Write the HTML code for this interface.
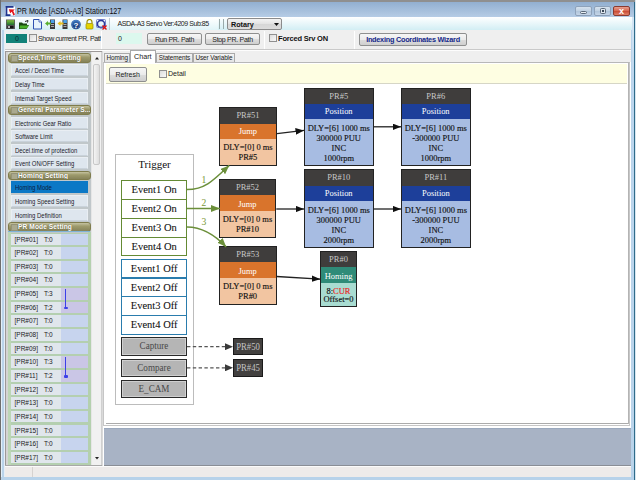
<!DOCTYPE html>
<html><head><meta charset="utf-8">
<style>
*{margin:0;padding:0;box-sizing:border-box}
html,body{width:636px;height:480px;overflow:hidden;background:#b9d3ea}
body{position:relative;font-family:"Liberation Sans",sans-serif;font-size:7px;color:#111}
.a{position:absolute}
.sf{font-family:"Liberation Serif",serif}
.t{white-space:nowrap;line-height:1}
.btn{position:absolute;border:1px solid #8e8f8f;border-radius:2px;background:linear-gradient(#f6f6f6 0%,#ebebeb 50%,#dddddd 51%,#cfcfcf 100%);text-align:center;white-space:nowrap;color:#222}
.sep{position:absolute;width:1px;background:#d0d0d0;border-right:1px solid #fff}
.cb{position:absolute;width:8px;height:8px;border:1px solid #8f8f8f;background:linear-gradient(135deg,#dcdcdc,#f8f8f8)}
.hd{position:absolute;left:8px;width:82.5px;height:9.5px;border-radius:3px;border:1px solid #7f7c4c;background:linear-gradient(#c4c2a0,#9e9b6c 40%,#86835a);color:#fff;font-weight:bold;font-size:6.6px;line-height:7.5px;padding-left:9px;white-space:nowrap;overflow:hidden;text-shadow:0 0 1.2px #4e4c30;letter-spacing:.1px}
.hd:before{content:"";position:absolute;left:2px;top:1.2px;width:5px;height:5px;background:#aaa98e;border:.5px solid #959378}
.it{position:absolute;left:10.5px;width:77.5px;height:12px;background:#dee6ee;border:1px solid #e9eef3;border-bottom-color:#c9d2da;font-size:6.9px;line-height:11.5px;padding-left:3px;white-space:nowrap;color:#1a1a2a}.ix{display:inline-block;transform:scaleX(.86);transform-origin:0 50%}
.pr{position:absolute;left:10.5px;width:77.5px;height:11.5px;background:linear-gradient(90deg,#e0e6ec 0,#e0e6ec 50px,#c7d4ee 50px);font-size:6.5px;line-height:11.5px;padding-left:4px;white-space:nowrap;color:#1c1c1c}
.pr span{position:absolute;left:33.5px;top:0}
.node{position:absolute;border:1.3px solid #222;background:#3f3d3c;font-family:"Liberation Serif",serif;text-align:center;white-space:nowrap;overflow:hidden}
.node .h{color:#c9c9c9;font-size:9.1px}.sx{transform:scaleX(.93);transform-origin:50% 50%}
.node .b{color:#fff;font-size:9.1px}
.node .c{color:#111;font-size:9.1px;line-height:10px;-webkit-text-stroke-width:.15px}
.ev{position:absolute;left:120.9px;width:66.3px;height:19.5px;background:#fff;font-family:"Liberation Serif",serif;font-size:11.3px;text-align:center;line-height:17px;white-space:nowrap;color:#111;-webkit-text-stroke-width:.08px}
.on{border:1.8px solid #648a34}
.off{border:1.8px solid #2a7cad}
.gb{position:absolute;left:121px;width:66px;height:18.5px;background:#b5b5b5;border:1.5px solid #2a2a2a;box-shadow:inset 0 0 0 .8px #d8d8d8;font-family:"Liberation Serif",serif;font-size:9.8px;text-align:center;line-height:16.5px;color:#484848;white-space:nowrap}
.pb{position:absolute;left:233px;width:30px;height:17.7px;background:#42403f;border:1.3px solid #1a1a1a;color:#c4c4c4;font-family:"Liberation Serif",serif;font-size:9.4px;line-height:17px;text-align:center;white-space:nowrap}
</style></head><body>
<!-- window frame -->
<div class="a" style="left:0;top:0;width:635px;height:1.6px;background:#8f8f8f"></div>
<div class="a" style="left:0;top:0;width:1.2px;height:480px;background:#6e6e6e"></div><div class="a" style="left:1.2px;top:17px;width:.8px;height:463px;background:#e2eff9"></div><div class="a" style="left:4.4px;top:30px;width:.6px;height:447px;background:#e6eef6"></div>
<div class="a" style="left:1px;top:2px;width:633px;height:15px;background:linear-gradient(#92afd0,#b5cce5)"></div>
<div class="a" style="left:634.3px;top:2px;width:1px;height:478px;background:#2f6c8a"></div><div class="a" style="left:635.3px;top:0;width:.7px;height:480px;background:#dfe9ef"></div>
<div class="a" style="left:635px;top:0;width:1px;height:480px;background:#d8e6f0"></div>
<!-- title -->
<svg class="a" style="left:5px;top:6px" width="11" height="10" viewBox="0 0 11 10"><rect x="0.5" y="0.5" width="9.5" height="9" fill="#fff"/><path d="M0.5 0.8H8.5M1.5 0.8V9.2M0.5 9.2H5.5" stroke="#1f3590" stroke-width="1.7" fill="none"/><path d="M3.8 3.2L9.8 3.6L8.2 5L10 8.6L8.4 9.4L6.8 5.8L5.2 7.2Z" fill="#e3141c"/></svg>
<div class="a t" style="left:17px;top:7px;font-size:8.3px;color:#0c0c0c;transform:scaleX(.86);transform-origin:0 0">PR Mode [ASDA-A3] Station:127</div>
<div class="a" style="left:575px;top:6px;width:17px;height:10px;border:1px solid #8ea2ba;border-radius:2px;background:linear-gradient(#d6e2ee,#bfd0e2 50%,#afc4da 51%,#c6d6e8)"></div>
<div class="a" style="left:580px;top:10.5px;width:7px;height:3px;background:#e8eef4;border:1px solid #5a6878;border-radius:1.5px"></div>
<div class="a" style="left:594px;top:6px;width:17px;height:10px;border:1px solid #8ea2ba;border-radius:2px;background:linear-gradient(#d6e2ee,#bfd0e2 50%,#afc4da 51%,#c6d6e8)"></div>
<div class="a" style="left:599.5px;top:8px;width:6.5px;height:5.5px;border:1.3px solid #5a6878;background:#dfe6ee;border-radius:1.5px"></div><div class="a" style="left:602px;top:10px;width:1.5px;height:1.5px;background:#3a4858"></div>
<div class="a" style="left:613px;top:6px;width:17px;height:10px;border:1px solid #8a3a30;border-radius:2px;background:linear-gradient(#e6a090,#d8644e 50%,#c84a34 51%,#e08068)"></div>
<div class="a t" style="left:617px;top:6px;font-size:9px;font-weight:bold;color:#fff;width:9px;text-align:center;line-height:10px">x</div>
<!-- toolbar -->
<div class="a" style="left:1px;top:17px;width:630.5px;height:13px;background:linear-gradient(#ffffff,#d2eef4)"></div><div class="a" style="left:631.5px;top:17px;width:2.8px;height:460px;background:linear-gradient(#d6e6f4,#bcd6ee 60px,#b9d3ea)"></div>
<svg class="a" style="left:5px;top:19px" width="104" height="11" viewBox="0 0 104 11">
<defs><linearGradient id="fg" x1="0" y1="0" x2="0" y2="1"><stop offset="0" stop-color="#7cc03a"/><stop offset="1" stop-color="#1f6e35"/></linearGradient>
<linearGradient id="hg" x1="0" y1="0" x2="0" y2="1"><stop offset="0" stop-color="#3a78c0"/><stop offset="1" stop-color="#0c2a66"/></linearGradient></defs>
<rect x="1" y="0.5" width="9" height="9.5" fill="#5a5a5a"/><rect x="1.8" y="1.2" width="7.4" height="4.8" fill="url(#fg)"/><rect x="2.5" y="6.8" width="6" height="2.6" fill="#111"/><rect x="3" y="7.2" width="2" height="1.6" fill="#ddd"/>
<path d="M14 3.5 L17 3.5 L18 4.5 L22 4.5 L22 6 L24 6 L21.5 10 L14 10 Z" fill="#1a4a12"/><path d="M15 6.5 L24 6.5 L21.5 9.5 L14.5 9.5 Z" fill="#48b02a"/><path d="M20 2.5 L23 1.5 L22.5 3.5" stroke="#222" stroke-width="1" fill="none"/>
<path d="M28.5 0.5 H34 L36.5 3 V10 H28.5 Z" fill="#e6f4fb" stroke="#2f52b0" stroke-width="1"/><path d="M34 0.5 V3 H36.5" fill="#fff" stroke="#2f52b0" stroke-width=".8"/>
<rect x="45" y="0.5" width="5" height="9.5" fill="#3a3a3a"/><rect x="45.8" y="1" width="3.6" height="3" fill="#4aa0e8"/><rect x="46" y="5" width="3" height="1" fill="#aaa"/><rect x="46" y="7" width="3" height="1" fill="#aaa"/>
<path d="M40 4.5 L43 2 V3.5 H46 V5.5 H43 V7 Z" fill="#5ab030"/>
<rect x="57.5" y="0.5" width="5" height="9.5" fill="#3a3a3a"/><rect x="58.3" y="1" width="3.6" height="3" fill="#4aa0e8"/><rect x="58.5" y="5" width="3" height="1" fill="#aaa"/><rect x="58.5" y="7" width="3" height="1" fill="#aaa"/>
<path d="M52.5 4.5 L55.5 2 V3.5 H58.5 V5.5 H55.5 V7 Z" fill="#e8c020"/>
<circle cx="71" cy="5.5" r="4.8" fill="url(#hg)"/><circle cx="71" cy="5.5" r="4" fill="none" stroke="#5a8ad0" stroke-width=".6"/><text x="71" y="8.6" font-family="Liberation Sans" font-weight="bold" font-size="8" fill="#fff" text-anchor="middle">?</text>
<path d="M82 4.5 V3 A2.5 2.5 0 0 1 87 3 V4.5" stroke="#a09000" stroke-width="1.2" fill="none"/><rect x="81" y="4.5" width="7" height="5.5" rx="1" fill="#e4d400" stroke="#9a8a00" stroke-width=".7"/>
<circle cx="96" cy="5" r="3.6" fill="none" stroke="#2b3a9a" stroke-width="1.6"/><rect x="91.5" y="0.5" width="9" height="8" rx="1" fill="none" stroke="#5a68c0" stroke-width=".8"/><path d="M97.5 6.5 L101.5 10.5 M101.5 6.5 L97.5 10.5" stroke="#e01010" stroke-width="1.4"/>
</svg>
<div class="a" style="left:108.5px;top:17.5px;width:2px;height:12.5px;background:#d4dfe4;border-left:1px solid #c3ccd2"></div>
<div class="a" style="left:110px;top:18px;width:108px;height:12px;background:linear-gradient(#ffffff,#e0f4f8)"></div><div class="a t" style="left:117.5px;top:20px;font-size:7px;color:#1a1a1a;letter-spacing:-.45px">ASDA-A3 Servo Ver:4209 Sub:85</div>
<div class="a" style="left:219px;top:19px;width:1px;height:10px;background:#9aa"></div>
<div class="a" style="left:223px;top:19px;width:1px;height:10px;background:#9aa"></div>
<div class="a" style="left:227px;top:18px;width:55px;height:12px;border:1px solid #8b8b8b;border-radius:2px;background:linear-gradient(#f4f4f4,#e2e2e2 50%,#d6d6d6 51%,#dcdcdc)"></div>
<div class="a t" style="left:231px;top:20.5px;font-size:7.2px;font-weight:bold;color:#111">Rotary</div>
<svg class="a" style="left:274px;top:23px" width="5" height="3"><path d="M0 0H5L2.5 3Z" fill="#111"/></svg>
<!-- row2 -->
<div class="a" style="left:5px;top:30px;width:626px;height:436px;background:#efefef"></div>
<div class="a" style="left:6px;top:34px;width:21px;height:8.5px;background:#128279"></div>
<div class="a t" style="left:15px;top:35px;font-size:7px;color:#0b2b30">0</div>
<div class="cb" style="left:29px;top:34px"></div>
<div class="a t" style="left:38px;top:35px;width:63px;overflow:hidden;font-size:7px;color:#222;letter-spacing:-.4px">Show currrent PR. Path</div>
<div class="sep" style="left:101px;top:31px;height:18px"></div>
<div class="a" style="left:116px;top:33px;width:26px;height:11px;background:#dcf8ee"></div>
<div class="a t" style="left:118px;top:34.5px;font-size:7px;color:#222">0</div>
<div class="btn" style="left:147px;top:32.5px;width:55px;height:12px;font-size:7px;line-height:11px;letter-spacing:-.3px">Run PR. Path</div>
<div class="btn" style="left:205px;top:32.5px;width:55px;height:12px;font-size:7px;line-height:11px;letter-spacing:-.3px">Stop PR. Path</div>
<div class="sep" style="left:264px;top:31px;height:18px"></div>
<div class="cb" style="left:269px;top:34px"></div>
<div class="a t" style="left:278px;top:34.5px;font-size:7.5px;font-weight:bold;color:#111;letter-spacing:-.2px">Forced Srv ON</div>
<div class="sep" style="left:354px;top:31px;height:18px"></div>
<div class="btn" style="left:359px;top:32.5px;width:108px;height:13.5px;font-size:7.3px;line-height:11.5px;font-weight:bold;color:#14288a;letter-spacing:-.25px">Indexing Coordinates Wizard</div>
<div class="a" style="left:5px;top:48.5px;width:626px;height:1px;background:#c9c9c9"></div>
<div class="a" style="left:5px;top:49.5px;width:626px;height:1px;background:#fdfdfd"></div>
<!-- status bar -->
<div class="a" style="left:5px;top:466px;width:626px;height:11px;background:#eeebea;border-top:1.2px solid #fbfbfb"></div>
<div class="a" style="left:32px;top:467px;width:1px;height:10px;background:#d6d2d0"></div>
<div class="a" style="left:1px;top:477px;width:633px;height:3px;background:#b7d2ea"></div>
<div class="a" style="left:5px;top:51px;width:97px;height:415px;background:linear-gradient(#c0c7ca 0,#c0c7ca 181px,#b4cfb0 181px);border:1px solid #9c9898;border-width:1px 0 0 1.5px"></div>
<div class="a" style="left:6px;top:52px;width:1.5px;height:413px;background:#d4d4d4"></div><div class="a" style="left:7.5px;top:52px;width:3px;height:180px;background:#dfe6e2"></div><div class="a" style="left:7.5px;top:232px;width:3px;height:233px;background:#bcd6b6"></div><div class="a" style="left:88px;top:232px;width:3px;height:233px;background:#b4d0ae"></div>
<div class="hd" style="top:53px">Speed,Time Setting</div>
<div class="hd" style="top:105px">General Parameter S...</div>
<div class="hd" style="top:170.6px">Homing Setting</div>
<div class="hd" style="top:222px">PR Mode Setting</div>
<div class="it" style="top:64.4px"><span class="ix">Accel / Decel Time</span></div>
<div class="it" style="top:78px"><span class="ix">Delay Time</span></div>
<div class="it" style="top:91.7px"><span class="ix">Internal Target Speed</span></div>
<div class="it" style="top:116.6px"><span class="ix">Electronic Gear Ratio</span></div>
<div class="it" style="top:130.1px"><span class="ix">Software Limit</span></div>
<div class="it" style="top:143.7px"><span class="ix">Decel.time of protection</span></div>
<div class="it" style="top:157.3px"><span class="ix">Event ON/OFF Setting</span></div>
<div class="it" style="top:181.3px;background:#0b78c6;border-color:#0b78c6;color:#0a1c40"><span class="ix">Homing Mode</span></div>
<div class="it" style="top:195.4px"><span class="ix">Homing Speed Setting</span></div>
<div class="it" style="top:209px"><span class="ix">Homing Definition</span></div>
<div class="a" style="left:8px;top:231px;width:82px;height:1px;background:#7fb3d8"></div>
<div class="pr" style="top:233.50px">[PR#01]<span>T:0</span></div>
<div class="pr" style="top:247.15px">[PR#02]<span>T:0</span></div>
<div class="pr" style="top:260.80px">[PR#03]<span>T:0</span></div>
<div class="pr" style="top:274.45px">[PR#04]<span>T:0</span></div>
<div class="pr" style="top:288.10px">[PR#05]<span>T:3</span></div>
<div class="pr" style="top:301.75px">[PR#06]<span>T:2</span></div>
<div class="pr" style="top:315.40px">[PR#07]<span>T:0</span></div>
<div class="pr" style="top:329.05px">[PR#08]<span>T:0</span></div>
<div class="pr" style="top:342.70px">[PR#09]<span>T:0</span></div>
<div class="pr" style="top:356.35px">[PR#10]<span>T:3</span></div>
<div class="pr" style="top:370.00px">[PR#11]<span>T:2</span></div>
<div class="pr" style="top:383.65px">[PR#12]<span>T:0</span></div>
<div class="pr" style="top:397.30px">[PR#13]<span>T:0</span></div>
<div class="pr" style="top:410.95px">[PR#14]<span>T:0</span></div>
<div class="pr" style="top:424.60px">[PR#15]<span>T:0</span></div>
<div class="pr" style="top:438.25px">[PR#16]<span>T:0</span></div>
<div class="pr" style="top:451.90px">[PR#17]<span>T:0</span></div>
<div class="a" style="left:61px;top:288.10px;width:27px;height:11.5px;background:#cac6e6"></div>
<div class="a" style="left:61px;top:301.75px;width:27px;height:11.5px;background:#cac6e6"></div>
<div class="a" style="left:61px;top:356.35px;width:27px;height:11.5px;background:#cac6e6"></div>
<div class="a" style="left:61px;top:370.00px;width:27px;height:11.5px;background:#cac6e6"></div>
<div class="a" style="left:64.8px;top:288.60px;width:1.3px;height:20px;background:#3c40e8"></div>
<div class="a" style="left:63.5px;top:306.90px;width:4px;height:2.4px;border-radius:1px;background:#3c40e8"></div>
<div class="a" style="left:64.8px;top:356.85px;width:1.3px;height:20px;background:#3c40e8"></div>
<div class="a" style="left:63.5px;top:375.15px;width:4px;height:2.4px;border-radius:1px;background:#3c40e8"></div>
<div class="a" style="left:91px;top:52px;width:10.5px;height:413px;background:#f1f1f1;border-left:1px solid #e6e6e6;border-right:1px solid #d0d0d0"></div>
<div class="a" style="left:93px;top:64px;width:7px;height:101px;background:linear-gradient(90deg,#f4f4f4,#dedede);border:1px solid #c8c8c8;border-radius:2px"></div>
<svg class="a" style="left:94.5px;top:56.5px" width="4" height="3"><path d="M0 2.5H4L2 0Z" fill="#222"/></svg>
<svg class="a" style="left:94.5px;top:457px" width="4" height="3"><path d="M0 0H4L2 2.5Z" fill="#222"/></svg>
<div class="a" style="left:5px;top:465px;width:97px;height:1px;background:#a8a8a8"></div>
<div class="a" style="left:102px;top:51px;width:1px;height:415px;background:#dadada"></div>
<div class="a" style="left:103px;top:62px;width:528px;height:404px;background:#fff"></div>
<div class="a" style="left:103px;top:61.5px;width:527px;height:364px;border:1px solid #c6c6c6;border-top:1.3px solid #b8b8b8"></div>
<div class="a" style="left:627.5px;top:63px;width:1.2px;height:361px;background:#b4b4b4"></div>
<div class="a t" style="left:104.4px;top:52.5px;width:25.8px;height:9.5px;border:1px solid #a9a9a9;border-bottom:none;background:linear-gradient(#f3f3f3,#e3e3e3);font-size:6.4px;line-height:7.6px;text-align:center;color:#222;letter-spacing:-.1px">Homing</div>
<div class="a t" style="left:156px;top:52.5px;width:37.0px;height:9.5px;border:1px solid #a9a9a9;border-bottom:none;background:linear-gradient(#f3f3f3,#e3e3e3);font-size:6.4px;line-height:7.6px;text-align:center;color:#222;letter-spacing:-.1px">Statements</div>
<div class="a t" style="left:193px;top:52.5px;width:41.8px;height:9.5px;border:1px solid #a9a9a9;border-bottom:none;background:linear-gradient(#f3f3f3,#e3e3e3);font-size:6.4px;line-height:7.6px;text-align:center;color:#222;letter-spacing:-.1px">User Variable</div>
<div class="a t" style="left:130px;top:50.3px;width:25.5px;height:13px;border:1px solid #a9a9a9;border-bottom:none;background:#fff;font-size:7.2px;line-height:11.2px;text-align:center;color:#222">Chart</div>
<div class="a" style="left:106.3px;top:64px;width:521px;height:20px;background:#fefee2;border-bottom:1.2px solid #d6d6c6"></div>
<div class="btn" style="left:108.5px;top:66.6px;width:38.3px;height:15px;font-size:7px;line-height:13px">Refresh</div>
<div class="cb" style="left:159px;top:70px"></div>
<div class="a t" style="left:168px;top:69.5px;font-size:7px;color:#222">Detail</div>
<div class="a" style="left:105.5px;top:422.6px;width:522px;height:1.4px;background:#ababab"></div>
<div class="a" style="left:104px;top:428px;width:527px;height:38px;background:#a8b3c5;border-top:1px solid #9aa8bd;border-bottom:1.2px solid #8a8e96"></div>
<div class="a" style="left:115.3px;top:154.3px;width:78.3px;height:250.6px;border:1.6px solid #bcbcbc"></div>
<div class="a t sf" style="left:115.6px;top:159px;width:77.8px;text-align:center;font-size:11px;color:#111">Trigger</div>
<div class="ev on" style="top:180px"><div class="sx">Event1 On</div></div>
<div class="ev on" style="top:199px"><div class="sx">Event2 On</div></div>
<div class="ev on" style="top:218px"><div class="sx">Event3 On</div></div>
<div class="ev on" style="top:236.6px"><div class="sx">Event4 On</div></div>
<div class="ev off" style="top:258.5px"><div class="sx">Event1 Off</div></div>
<div class="ev off" style="top:277.5px"><div class="sx">Event2 Off</div></div>
<div class="ev off" style="top:296.4px"><div class="sx">Event3 Off</div></div>
<div class="ev off" style="top:315.3px"><div class="sx">Event4 Off</div></div>
<div class="gb" style="top:337px"><div class="sx">Capture</div></div>
<div class="gb" style="top:358.5px"><div class="sx">Compare</div></div>
<div class="gb" style="top:379.8px"><div class="sx">E_CAM</div></div>
<div class="pb" style="top:337.8px"><div class="sx">PR#50</div></div>
<div class="pb" style="top:359px"><div class="sx">PR#45</div></div>
<div class="node" style="left:219px;top:107px;width:57.8px;height:59.3px"><div class="h" style="height:15.5px;line-height:15.5px"><div class="sx">PR#51</div></div><div class="b" style="height:15.8px;line-height:15.8px;background:#d9742c"><div class="sx" style="position:relative;top:.8px">Jump</div></div><div class="c" style="height:26.7px;background:#f2c5a1;padding-top:2.6px;line-height:10px"><div class="sx">DLY=[0] 0 ms<br>PR#5</div></div></div>
<div class="node" style="left:219.4px;top:179.2px;width:56.9px;height:58.6px"><div class="h" style="height:15.1px;line-height:15.1px"><div class="sx">PR#52</div></div><div class="b" style="height:16.1px;line-height:16.1px;background:#d9742c"><div class="sx" style="position:relative;top:.8px">Jump</div></div><div class="c" style="height:26.1px;background:#f2c5a1;padding-top:2.6px;line-height:10px"><div class="sx">DLY=[0] 0 ms<br>PR#10</div></div></div>
<div class="node" style="left:219.3px;top:246.2px;width:57.4px;height:58.8px"><div class="h" style="height:14.7px;line-height:14.7px"><div class="sx">PR#53</div></div><div class="b" style="height:16.1px;line-height:16.1px;background:#d9742c"><div class="sx" style="position:relative;top:.8px">Jump</div></div><div class="c" style="height:26.7px;background:#f2c5a1;padding-top:2.6px;line-height:10px"><div class="sx">DLY=[0] 0 ms<br>PR#0</div></div></div>
<div class="node" style="left:304.1px;top:87.5px;width:69.5px;height:78.3px"><div class="h" style="height:15.2px;line-height:15.2px"><div class="sx">PR#5</div></div><div class="b" style="height:15.8px;line-height:15.8px;background:#1d3f9a"><div class="sx" style="position:relative;top:.8px">Position</div></div><div class="c" style="height:46.0px;background:#a7bce2;padding-top:3.8px;line-height:10px"><div class="sx">DLY=[6] 1000 ms<br>300000 PUU<br>INC<br>1000rpm</div></div></div>
<div class="node" style="left:401.1px;top:87.5px;width:69.5px;height:78.3px"><div class="h" style="height:15.2px;line-height:15.2px"><div class="sx">PR#6</div></div><div class="b" style="height:15.8px;line-height:15.8px;background:#1d3f9a"><div class="sx" style="position:relative;top:.8px">Position</div></div><div class="c" style="height:46.0px;background:#a7bce2;padding-top:3.8px;line-height:10px"><div class="sx">DLY=[6] 1000 ms<br>-300000 PUU<br>INC<br>1000rpm</div></div></div>
<div class="node" style="left:304.1px;top:169.4px;width:69.5px;height:78.7px"><div class="h" style="height:15.3px;line-height:15.3px"><div class="sx">PR#10</div></div><div class="b" style="height:15.8px;line-height:15.8px;background:#1d3f9a"><div class="sx" style="position:relative;top:.8px">Position</div></div><div class="c" style="height:46.3px;background:#a7bce2;padding-top:3.8px;line-height:10px"><div class="sx">DLY=[6] 1000 ms<br>300000 PUU<br>INC<br>2000rpm</div></div></div>
<div class="node" style="left:401.1px;top:169.4px;width:69.8px;height:78.7px"><div class="h" style="height:15.3px;line-height:15.3px"><div class="sx">PR#11</div></div><div class="b" style="height:15.8px;line-height:15.8px;background:#1d3f9a"><div class="sx" style="position:relative;top:.8px">Position</div></div><div class="c" style="height:46.3px;background:#a7bce2;padding-top:3.8px;line-height:10px"><div class="sx">DLY=[6] 1000 ms<br>-300000 PUU<br>INC<br>2000rpm</div></div></div>
<div class="node" style="left:320.2px;top:251.4px;width:37.0px;height:56.1px"><div class="h" style="height:14.8px;line-height:14.8px"><div class="sx">PR#0</div></div><div class="b" style="height:16.1px;line-height:16.1px;background:#2f8b78"><div class="sx" style="position:relative;top:.8px">Homing</div></div><div class="c" style="height:23.9px;background:#a8dcd1;padding-top:4px;line-height:8.2px"><div class="sx">8:<span style="color:#ee1c1c">CUR</span><br>Offset=0</div></div></div>
<svg class="a" style="left:0;top:0" width="636" height="480">
<defs><marker id="ab" markerWidth="8.5" markerHeight="6.6" refX="8.5" refY="3.3" orient="auto" markerUnits="userSpaceOnUse"><path d="M0 0L8.5 3.3L0 6.6Z" fill="#111"/></marker><marker id="ag" markerWidth="9" markerHeight="7" refX="9" refY="3.5" orient="auto" markerUnits="userSpaceOnUse"><path d="M0 0L9 3.5L0 7Z" fill="#6b8f3a"/></marker><marker id="ad" markerWidth="8" markerHeight="7" refX="8" refY="3.5" orient="auto" markerUnits="userSpaceOnUse"><path d="M0 0L8 3.5L0 7Z" fill="#3a3a3a"/></marker></defs>
<path d="M277 133.6L304 130.4" stroke="#222" stroke-width="1.3" fill="none" marker-end="url(#ab)"/>
<path d="M373.6 126.8L401 126.8" stroke="#222" stroke-width="1.3" fill="none" marker-end="url(#ab)"/>
<path d="M276.3 209L304 209" stroke="#222" stroke-width="1.3" fill="none" marker-end="url(#ab)"/>
<path d="M373.6 209L401 209" stroke="#222" stroke-width="1.3" fill="none" marker-end="url(#ab)"/>
<path d="M276.7 276.5L320.2 279.2" stroke="#222" stroke-width="1.3" fill="none" marker-end="url(#ab)"/>
<path d="M187 346.7H233" stroke="#555" stroke-width="1.3" stroke-dasharray="3.4 2.4" fill="none" marker-end="url(#ad)"/>
<path d="M187 367.8H233" stroke="#555" stroke-width="1.3" stroke-dasharray="3.4 2.4" fill="none" marker-end="url(#ad)"/>
<path d="M187 189.6C205 189.6 214 180 229.2 165.4" stroke="#6b8f3a" stroke-width="1.5" fill="none" marker-end="url(#ag)"/>
<path d="M187 208.5H220" stroke="#6b8f3a" stroke-width="1.5" fill="none" marker-end="url(#ag)"/>
<path d="M187 226.9C204 227 216 236 226.2 246.9" stroke="#6b8f3a" stroke-width="1.5" fill="none" marker-end="url(#ag)"/>
</svg>
<div class="a t sf" style="left:201.5px;top:174.5px;font-size:9.6px;color:#7a9738">1</div>
<div class="a t sf" style="left:201.5px;top:197.5px;font-size:9.6px;color:#7a9738">2</div>
<div class="a t sf" style="left:201.5px;top:217.3px;font-size:9.6px;color:#7a9738">3</div>
</body></html>
